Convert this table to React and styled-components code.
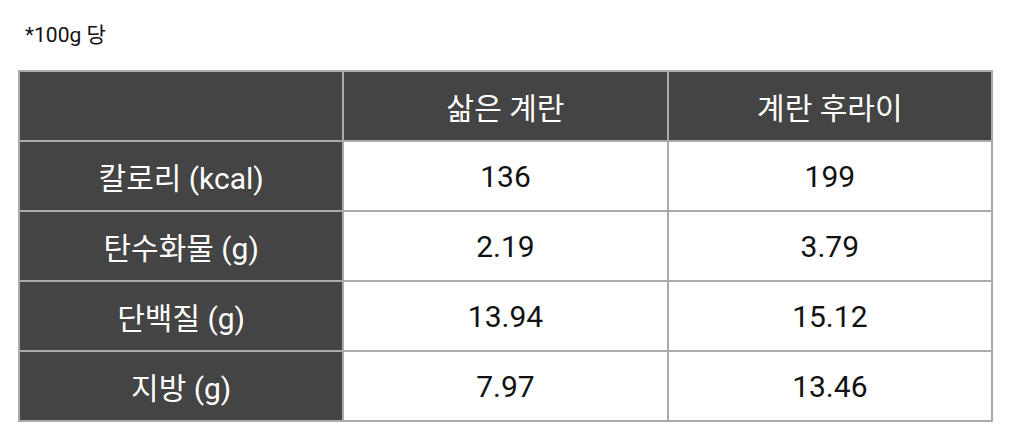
import React from 'react'
import styled, { createGlobalStyle } from 'styled-components'

const GlobalStyle = createGlobalStyle`
  body {
    margin: 0;
    background: #fff;
    font-family: Roboto, "Noto Sans CJK KR", sans-serif;
  }
`

const Page = styled.div`
  padding: 23px 17px 0 18px;
`

const Note = styled.p`
  margin: 0 0 23px 7px;
  font-size: 21px;
  line-height: 24px;
  color: #111;
`

const Table = styled.table`
  width: 975px;
  border-collapse: collapse;
  table-layout: fixed;
  border: 2px solid #aaa;
`

const Cell = styled.td`
  height: 68px;
  padding: 0;
  border: 2px solid #aaa;
  text-align: center;
  vertical-align: middle;
  font-size: 30px;
  font-weight: 400;
  background: ${p => (p.$dark ? '#444' : '#fff')};
  color: ${p => (p.$dark ? '#fff' : '#111')};
`

const rows = [
  ['칼로리 (kcal)', '136', '199'],
  ['탄수화물 (g)', '2.19', '3.79'],
  ['단백질 (g)', '13.94', '15.12'],
  ['지방 (g)', '7.97', '13.46'],
]

const App = () => {
  return (
    <Page>
      <GlobalStyle />
      <Note>*100g 당</Note>
      <Table>
        <thead>
          <tr>
            <Cell as="th" $dark></Cell>
            <Cell as="th" $dark>삶은 계란</Cell>
            <Cell as="th" $dark>계란 후라이</Cell>
          </tr>
        </thead>
        <tbody>
          {rows.map(([label, boiled, fried]) => (
            <tr key={label}>
              <Cell $dark>{label}</Cell>
              <Cell>{boiled}</Cell>
              <Cell>{fried}</Cell>
            </tr>
          ))}
        </tbody>
      </Table>
    </Page>
  )
}

export default App
